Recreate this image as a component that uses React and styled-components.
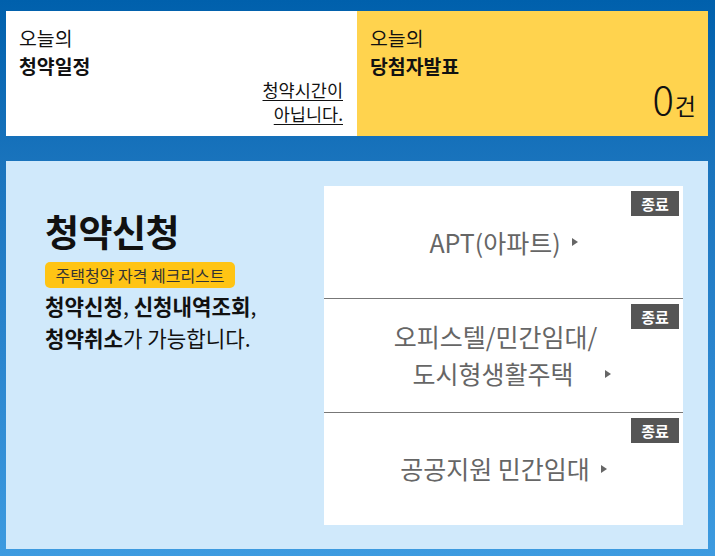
import React from "react";
import styled, { createGlobalStyle } from "styled-components";

const Global = createGlobalStyle`
  html, body { margin: 0; padding: 0; }
  body {
    font-family: "Noto Sans CJK KR", "Noto Sans", sans-serif;
    background: #0b62ac;
  }
  * { box-sizing: border-box; }
`;

const Page = styled.div`
  width: 715px;
  height: 556px;
  padding: 11px 7px 7px 6px;
  background: linear-gradient(180deg, #0060ac 0%, #1a74bd 30%, #2b86cf 65%, #3d9be0 100%);
  display: flex;
  flex-direction: column;
  gap: 25px;
`;

const TopRow = styled.div`
  display: grid;
  grid-template-columns: 351px 1fr;
  height: 125px;
`;

const InfoCard = styled.div`
  background: ${(p) => (p.$yellow ? "#ffd34e" : "#ffffff")};
  padding: 13px 14px 0 13px;
  display: flex;
  flex-direction: column;
  color: #111;
`;

const CardHeading = styled.h3`
  margin: 0;
  font-size: 19.4px;
  line-height: 28.2px;
  font-weight: 400;
  strong { font-weight: 700; }
`;

const NoticeLink = styled.a`
  align-self: flex-end;
  text-align: right;
  font-size: 17.5px;
  line-height: 24px;
  color: #111;
  text-decoration: underline;
  text-underline-offset: 3px;
  margin-top: -2px;
`;

const Count = styled.div`
  align-self: flex-end;
  margin-top: -4px;
  margin-right: -2px;
  display: flex;
  align-items: baseline;
  line-height: 44px;
`;

const CountNum = styled.span`
  font-size: 40px;
  font-weight: 300;
`;

const CountUnit = styled.span`
  font-size: 23px;
  font-weight: 400;
  margin-left: 1px;
`;

const Panel = styled.div`
  flex: 1;
  background: #d0e9fb;
  padding: 25px 25px 24px 39px;
  display: grid;
  grid-template-columns: 1fr 359px;
`;

const Intro = styled.div`
  padding-top: 22px;
  display: flex;
  flex-direction: column;
  align-items: flex-start;
`;

const Title = styled.h2`
  margin: 0;
  font-size: 37px;
  line-height: 46px;
  font-weight: 700;
  color: #111;
  letter-spacing: -0.5px;
`;

const CheckBadge = styled.span`
  margin-top: 8px;
  height: 26px;
  width: 190px;
  display: flex;
  align-items: center;
  justify-content: center;
  background: #ffc414;
  border-radius: 5px;
  font-size: 16px;
  color: #333;
`;

const Desc = styled.p`
  margin: 2px 0 0;
  font-size: 21.2px;
  line-height: 32px;
  color: #111;
  b { font-weight: 700; }
`;

const List = styled.div`
  background: #fff;
  display: flex;
  flex-direction: column;
`;

const Item = styled.a`
  position: relative;
  flex: 1;
  display: flex;
  flex-direction: column;
  align-items: center;
  justify-content: center;
  border-top: ${(p) => (p.$first ? "none" : "1px solid #777")};
  color: #666;
  font-size: 25px;
  line-height: 37px;
  text-decoration: none;
`;

const Line = styled.span`
  display: flex;
  align-items: center;
  padding-right: ${(p) => p.$padRight || 0}px;
  padding-left: ${(p) => p.$padLeft || 0}px;
`;

const Arrow = styled.span`
  display: inline-block;
  width: 0;
  height: 0;
  margin-left: ${(p) => p.$gap || 11}px;
  border-top: 4.5px solid transparent;
  border-bottom: 4.5px solid transparent;
  border-left: 6px solid #666;
`;

const Closed = styled.span`
  position: absolute;
  top: 5px;
  right: 4px;
  width: 48px;
  height: 25px;
  background: #555;
  color: #fff;
  font-size: 15px;
  line-height: 25px;
  font-weight: 700;
  display: flex;
  align-items: center;
  justify-content: center;
`;

export default function App() {
  return (
    <>
      <Global />
      <Page>
        <TopRow>
          <InfoCard>
            <CardHeading>
              오늘의
              <br />
              <strong>청약일정</strong>
            </CardHeading>
            <NoticeLink href="#">
              청약시간이
              <br />
              아닙니다.
            </NoticeLink>
          </InfoCard>
          <InfoCard $yellow>
            <CardHeading>
              오늘의
              <br />
              <strong>당첨자발표</strong>
            </CardHeading>
            <Count>
              <CountNum>0</CountNum>
              <CountUnit>건</CountUnit>
            </Count>
          </InfoCard>
        </TopRow>
        <Panel>
          <Intro>
            <Title>청약신청</Title>
            <CheckBadge>주택청약 자격 체크리스트</CheckBadge>
            <Desc>
              <b>청약신청</b>, <b>신청내역조회</b>,
              <br />
              <b>청약취소</b>가 가능합니다.
            </Desc>
          </Intro>
          <List>
            <Item href="#" $first>
              <Closed>종료</Closed>
              <Line>
                APT(아파트)
                <Arrow />
              </Line>
            </Item>
            <Item href="#">
              <Closed>종료</Closed>
              <Line $padRight={16}>오피스텔/민간임대/</Line>
              <Line $padLeft={16}>
                도시형생활주택
                <Arrow $gap={31} />
              </Line>
            </Item>
            <Item href="#">
              <Closed>종료</Closed>
              <Line>
                공공지원 민간임대
                <Arrow />
              </Line>
            </Item>
          </List>
        </Panel>
      </Page>
    </>
  );
}
